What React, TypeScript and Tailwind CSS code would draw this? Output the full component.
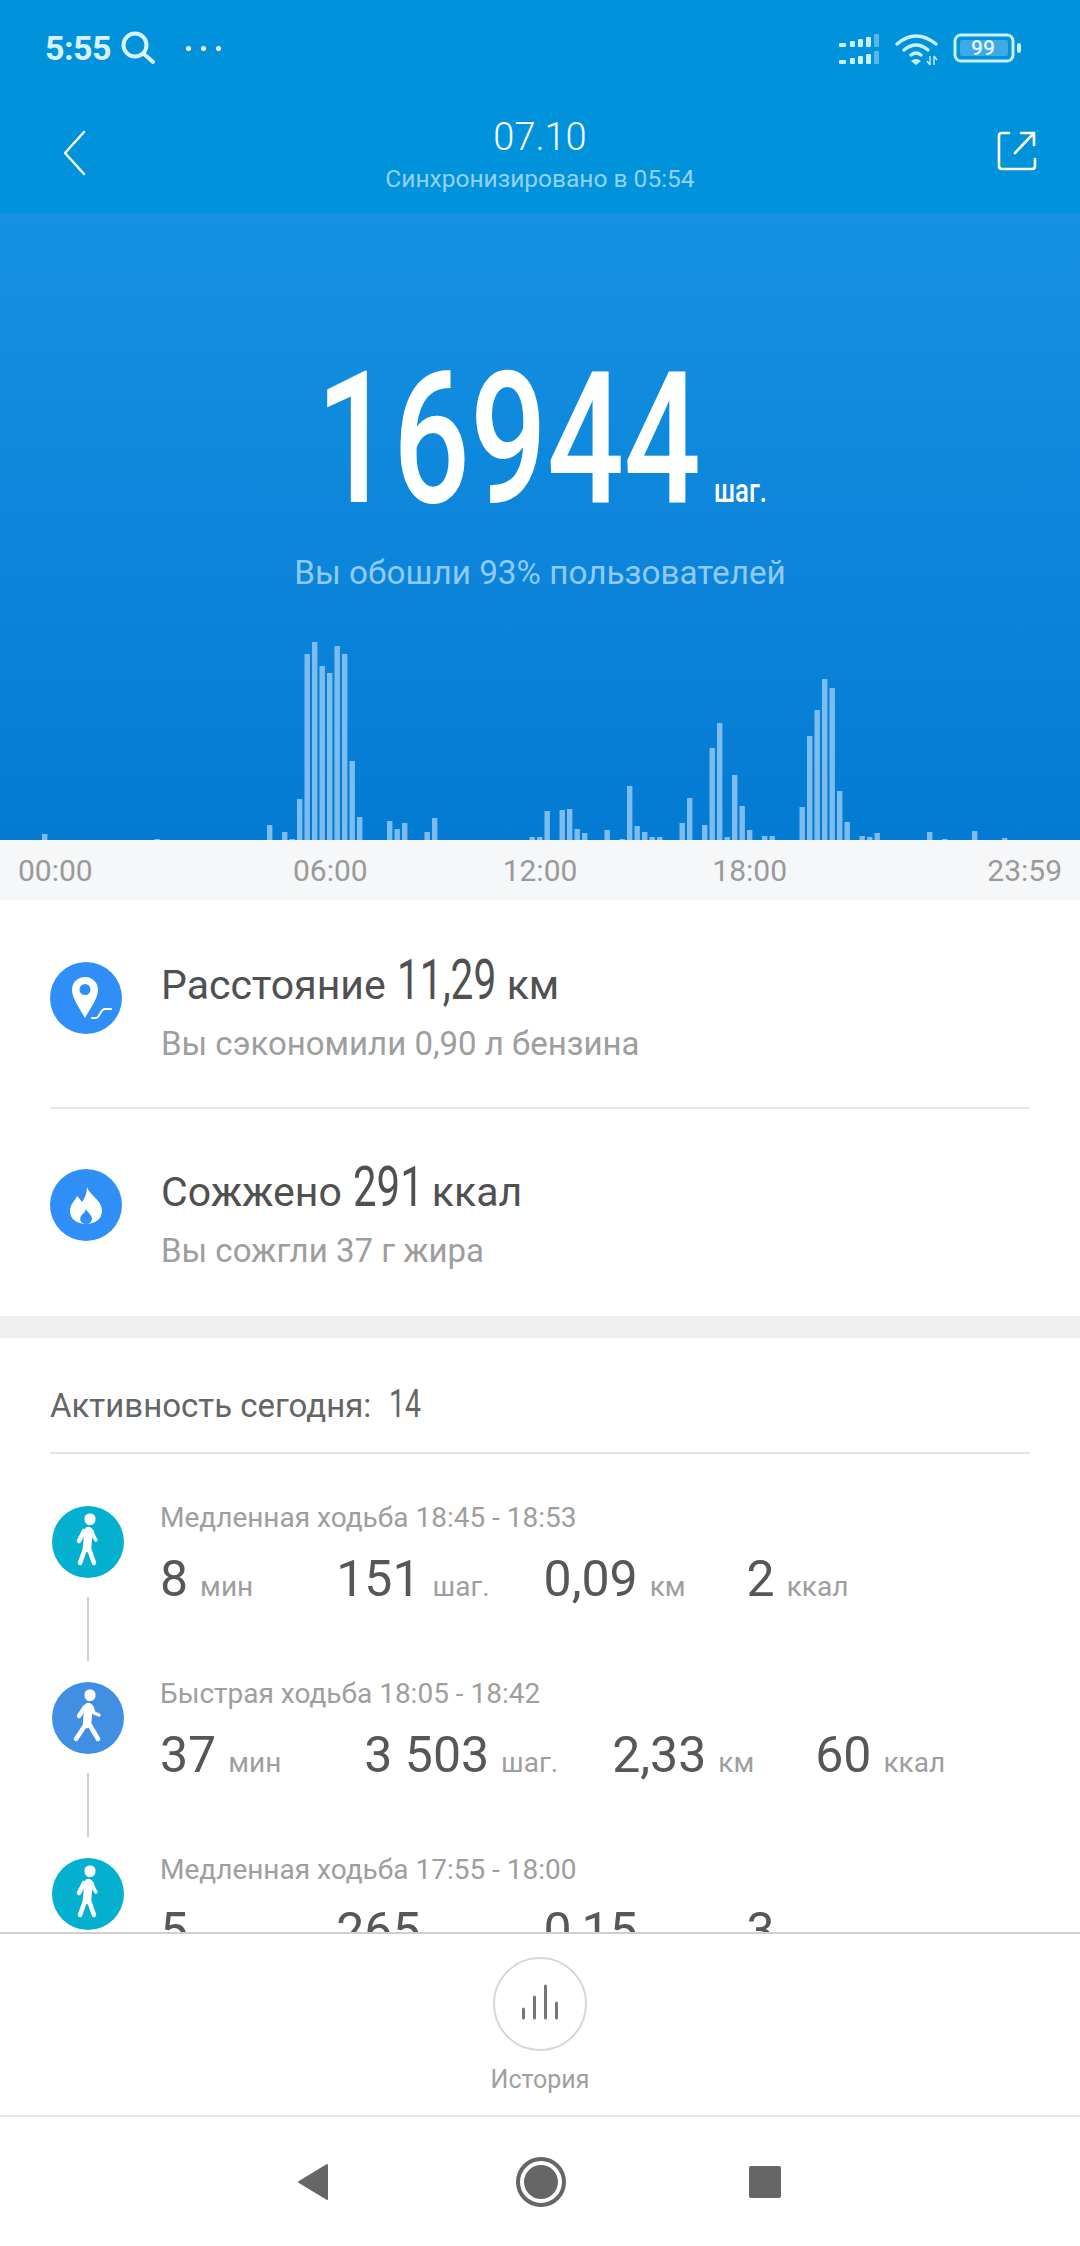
const bars: [number, number][] = [
  [4, 6], [19, 1], [34, 15], [36, 8], [37, 1], [38, 41], [39, 186], [40, 198], [41, 174], [42, 167],
  [43, 194], [44, 186], [45, 79], [46, 23], [50, 19], [51, 11], [52, 17], [55, 8], [56, 22], [69, 3],
  [70, 3], [71, 29], [73, 30], [74, 31], [75, 11], [76, 7], [79, 10], [81, 1], [82, 54], [83, 14],
  [84, 8], [85, 3], [86, 3], [89, 17], [90, 42], [92, 15], [93, 92], [94, 117], [95, 3], [96, 65],
  [97, 34], [98, 10], [100, 4], [101, 4], [105, 33], [106, 104], [107, 130], [108, 161], [109, 152],
  [110, 49], [111, 18], [113, 4], [114, 3], [115, 7], [122, 8], [124, 1], [128, 9], [132, 2],
];

const walks = [
  {
    title: 'Медленная ходьба 18:45 - 18:53',
    color: 'bg-[#04b0cf]',
    fast: false,
    stats: [['8', 'мин'], ['151', 'шаг.'], ['0,09', 'км'], ['2', 'ккал']],
  },
  {
    title: 'Быстрая ходьба 18:05 - 18:42',
    color: 'bg-[#408fe2]',
    fast: true,
    stats: [['37', 'мин'], ['3 503', 'шаг.'], ['2,33', 'км'], ['60', 'ккал']],
  },
  {
    title: 'Медленная ходьба 17:55 - 18:00',
    color: 'bg-[#04b0cf]',
    fast: false,
    stats: [['5', 'мин'], ['265', 'шаг.'], ['0,15', 'км'], ['3', 'ккал']],
  },
];

const statGaps = ['ml-0', 'ml-[83px]', 'ml-[54px]', 'ml-[61px]'];

function Walker({ fast }: { fast: boolean }) {
  return (
    <svg width="72" height="72" viewBox="0 0 72 72" fill="none" stroke="white" strokeLinecap="round" strokeLinejoin="round">
      <path d="M32.5 13 C32.5 9 35 7.5 38 7.5 C41 7.5 43.5 9 43.5 13 C43.5 17 41 19 38 19 C35 19 32.5 17 32.5 13 Z" fill="white" stroke="none" />
      <path d="M36.5 25 L35 42" strokeWidth="8.5" />
      {fast ? (
        <>
          <path d="M34 42 L24 57" strokeWidth="4.5" />
          <path d="M36 40 L46 57" strokeWidth="4.5" />
          <path d="M33 25 L27 34" strokeWidth="4.5" />
          <path d="M40 25 L42 31 L47 33" strokeWidth="3.5" />
        </>
      ) : (
        <>
          <path d="M33 43 L28 57" strokeWidth="4.5" />
          <path d="M36 40 L42 57" strokeWidth="4.5" />
          <path d="M32 25 L27 35" strokeWidth="4.5" />
          <path d="M40 25 L42 31 L44 34" strokeWidth="3.5" />
        </>
      )}
    </svg>
  );
}

function StatusIcons() {
  return (
    <svg width="190" height="60" viewBox="18 0 190 60">
      {[26, 43].map(y => (
        <g key={y}>
          <rect x="19" y={y - 4} width="7" height="4" rx="1" fill="#c9f0ff" />
          <rect x="30" y={y - 6} width="5" height="6" rx="1" fill="#c9f0ff" />
          <rect x="38" y={y - 8} width="5" height="8" rx="1" fill="#c9f0ff" />
          <rect x="46" y={y - 10} width="5" height="10" rx="1" fill="#c9f0ff" />
          <rect x="54" y={y - 13} width="5" height="13" rx="1" fill="#5ab6e8" />
        </g>
      ))}
      <g fill="none" stroke="#c9f0ff" strokeWidth="3.4" strokeLinecap="round">
        <path d="M77 23 Q96 7 116 23" />
        <path d="M84 29 Q96 19 108 29" />
        <path d="M91 34 Q96 30 101 34" />
      </g>
      <path d="M91 40 Q96 36 101 40 L96 44 Z" fill="#c9f0ff" />
      <path d="M110 35 V44 M107 40 L110 44 M114 35 V44 M114 35 L117 39" stroke="#c9f0ff" strokeWidth="1.4" fill="none" />
      <rect x="135" y="14" width="58" height="26" rx="6" fill="none" stroke="#c9f0ff" strokeWidth="3" />
      <rect x="140" y="19" width="48" height="16" rx="2" fill="#3fa9e6" />
      <rect x="197" y="22" width="4" height="10" rx="2" fill="#c9f0ff" />
      <text x="163" y="34" textAnchor="middle" fontSize="21" fontWeight="500" fontFamily="Roboto" fill="#e6f8ff">
        99
      </text>
    </svg>
  );
}

export default function App() {
  return (
    <div className="flex h-[2246px] w-[1080px] flex-col overflow-hidden bg-white font-[Roboto,sans-serif]">
      {/* Шапка */}
      <header className="h-[213px] shrink-0 bg-[#0093db]">
        <div className="flex h-[90px] items-center pl-[45px] pr-[52px] pt-[6px]">
          <span className="text-[34px] font-bold leading-none tracking-[-0.5px] text-[#d8f3ff]">5:55</span>
          <svg width="36" height="36" viewBox="0 0 36 36" fill="none" stroke="#d8f3ff" strokeWidth="4" strokeLinecap="round" className="ml-[9px]">
            <circle cx="15" cy="15" r="11.5" />
            <path d="M24 24 L33 32" />
          </svg>
          <div className="ml-[30px] flex gap-[10px]">
            <span className="h-[5px] w-[5px] rounded-full bg-white" />
            <span className="h-[5px] w-[5px] rounded-full bg-white" />
            <span className="h-[5px] w-[5px] rounded-full bg-white" />
          </div>
          <div className="ml-auto pt-[5px]">
            <StatusIcons />
          </div>
        </div>
        <div className="flex items-start pl-[63px] pr-[43px] pt-[25px]">
          <svg width="24" height="46" viewBox="0 0 24 46" fill="none" stroke="white" strokeWidth="2.4" strokeLinecap="round" strokeLinejoin="round" className="mt-[15px]">
            <path d="M21 2 L2 23 L21 44" />
          </svg>
          <div className="flex flex-1 flex-col items-center pr-[4px]">
            <span className="text-[38px] font-light leading-[44px] text-white">07.10</span>
            <span className="mt-[5px] text-[24.5px] font-normal leading-[30px] text-[#93d2f6]">Синхронизировано в 05:54</span>
          </div>
          <svg width="40" height="40" viewBox="0 0 40 40" fill="none" stroke="white" strokeWidth="2.6" strokeLinecap="round" strokeLinejoin="round" className="mt-[16px]">
            <path d="M12 2 H5 Q2 2 2 5 V35 Q2 38 5 38 H35 Q38 38 38 35 V28" />
            <path d="M18 22 L36 3 M24 2 H37 V14" />
          </svg>
        </div>
      </header>

      {/* Шаги и график */}
      <section className="flex h-[627px] shrink-0 flex-col bg-gradient-to-b from-[#1591e2] to-[#047bd3]">
        <div className="flex items-baseline pl-[316px] pt-[132px]">
          <span className="inline-block w-[384px] origin-left scale-x-[0.74] text-[183px] font-medium leading-[190px] text-white">16944</span>
          <span className="ml-[14px] inline-block origin-left scale-x-[0.78] text-[33px] font-medium leading-none text-white">шаг.</span>
        </div>
        <p className="mt-[18px] text-center text-[33.3px] leading-[40px] text-[#8fcbf6]">Вы обошли 93% пользователей</p>
        <svg width="1080" height="212" viewBox="0 0 1080 212" className="mt-auto block">
          {bars.map(([n, h]) => (
            <rect key={n} x={12 + n * 7.5} y={212 - h} width="5.4" height={h} fill="#7cbcef" />
          ))}
        </svg>
      </section>

      {/* Шкала времени */}
      <div className="flex h-[60px] shrink-0 items-center justify-between bg-[#f5f7f9] px-[18px] text-[30px] text-[#9a9a9a]">
        <span>00:00</span>
        <div className="flex gap-[135px]">
          <span>06:00</span>
          <span>12:00</span>
          <span>18:00</span>
        </div>
        <span>23:59</span>
      </div>

      {/* Расстояние и калории */}
      <section className="h-[416px] shrink-0 px-[50px] pt-[62px]">
        <div className="flex h-[147px] border-b-2 border-[#e6e6e6]">
          <div className="flex h-[72px] w-[72px] shrink-0 items-center justify-center rounded-full bg-[#2f8ff7]">
            <svg width="72" height="72" viewBox="0 0 72 72">
              <path fillRule="evenodd" d="M35 15 C42.5 15 48 20.5 48 28 C48 36 40 47 35 56 C30 47 22 36 22 28 C22 20.5 27.5 15 35 15 Z M35 22 A5.5 5.5 0 1 0 35 33 A5.5 5.5 0 1 0 35 22 Z" fill="white" />
              <path d="M42 56 H46 C50 56 50 47 55 47 H61" fill="none" stroke="white" strokeWidth="2" strokeLinecap="round" />
            </svg>
          </div>
          <div className="ml-[39px] flex-1">
            <div className="-mt-[14px] flex h-[64px] items-baseline text-[#505050]">
              <span className="text-[41px] leading-[64px]">Расстояние</span>
              <span className="ml-[11px] inline-block w-[110px] origin-left scale-x-[0.725] text-[56px] leading-[64px]">11,29</span>
              <span className="text-[41px] leading-[64px]">км</span>
            </div>
            <p className="mt-[13px] text-[33px] leading-[38px] text-[#9e9e9e]">Вы сэкономили 0,90 л бензина</p>
          </div>
        </div>
        <div className="flex pt-[60px]">
          <div className="flex h-[72px] w-[72px] shrink-0 items-center justify-center rounded-full bg-[#2f8ff7]">
            <svg width="72" height="72" viewBox="0 0 72 72">
              <path d="M37 17 C38 26 52 30 52 42 C52 50 45 55 36 55 C27 55 20 50 20 42 C20 35 25 32 27 27 C30 30 31 32 32 33 C35 29 37 24 37 17 Z" fill="white" />
              <path d="M36 55 C31 55 29 51 31 47 C33 44 35 44 36 40 C38 44 42 46 42 50 C42 53 39 55 36 55 Z" fill="#2f8ff7" />
            </svg>
          </div>
          <div className="ml-[39px] flex-1">
            <div className="-mt-[14px] flex h-[64px] items-baseline text-[#505050]">
              <span className="text-[41px] leading-[64px]">Сожжено</span>
              <span className="ml-[11px] inline-block w-[79px] origin-left scale-x-[0.75] text-[56px] leading-[64px]">291</span>
              <span className="text-[41px] leading-[64px]">ккал</span>
            </div>
            <p className="mt-[13px] text-[33px] leading-[38px] text-[#9e9e9e]">Вы сожгли 37 г жира</p>
          </div>
        </div>
      </section>

      <div className="h-[22px] shrink-0 bg-[#eeeff1]" />

      {/* Активность */}
      <section className="min-h-0 flex-1 overflow-hidden">
        <div className="mx-[50px] flex h-[116px] items-baseline border-b-2 border-[#e3e3e3] pt-[44px] text-[#666]">
          <span className="text-[33px] leading-[44px]">Активность сегодня:</span>
          <span className="ml-[18px] inline-block origin-left scale-x-[0.75] text-[38px] leading-[44px]">14</span>
        </div>
        <div className="px-[52px] pt-[52px]">
          {walks.map((w, i) => (
            <div key={w.title} className="flex h-[176px]">
              <div className="flex w-[72px] shrink-0 flex-col items-center">
                <div className={`h-[72px] w-[72px] rounded-full ${w.color}`}>
                  <Walker fast={w.fast} />
                </div>
                {i < walks.length - 1 && <div className="mt-[19px] h-[64px] w-[2px] bg-[#cfcfcf]" />}
              </div>
              <div className="ml-[36px] -mt-[4px]">
                <p className="text-[28px] leading-[32px] text-[#9e9e9e]">{w.title}</p>
                <div className="mt-[17px] flex items-baseline">
                  {w.stats.map(([value, unit], j) => (
                    <div key={unit} className={`flex items-baseline ${statGaps[j]}`}>
                      <span className="text-[50px] leading-[56px] font-normal text-[#575757]">{value}</span>
                      <span className="ml-[12px] text-[28px] leading-[56px] text-[#9e9e9e]">{unit}</span>
                    </div>
                  ))}
                </div>
              </div>
            </div>
          ))}
        </div>
      </section>

      {/* История */}
      <section className="flex h-[185px] shrink-0 flex-col items-center border-y-2 border-t-[#cfcfcf] border-b-[#e8e8e8] bg-white pt-[23px]">
        <div className="flex h-[94px] w-[94px] items-center justify-center rounded-full border-2 border-[#d8d8d8]">
          <svg width="40" height="40" viewBox="0 0 40 40" fill="none" stroke="#777" strokeWidth="3" strokeLinecap="round">
            <path d="M3.5 34 V25 M14.5 34 V13 M25.5 34 V2 M36.5 34 V19" />
          </svg>
        </div>
        <span className="mt-[13px] text-[25px] leading-[32px] text-[#a0a0a0]">История</span>
      </section>

      {/* Навигация */}
      <nav className="flex h-[129px] shrink-0 items-center pl-[297px]">
        <svg width="32" height="38" viewBox="0 0 32 38">
          <path d="M30 2 V36 L2 19 Z" fill="#666" stroke="#666" strokeWidth="2" strokeLinejoin="round" />
        </svg>
        <div className="ml-[187px] flex h-[50px] w-[50px] items-center justify-center rounded-full border-[4px] border-[#666]">
          <div className="h-[34px] w-[34px] rounded-full bg-[#666]" />
        </div>
        <div className="ml-[183px] h-[32px] w-[32px] rounded-[2px] bg-[#666]" />
      </nav>
    </div>
  );
}
